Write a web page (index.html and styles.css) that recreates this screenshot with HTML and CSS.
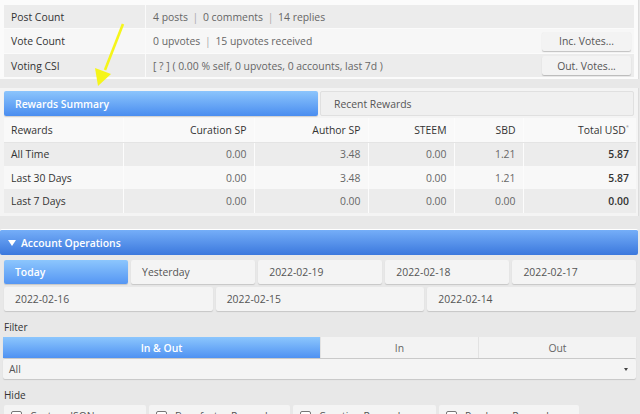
FILE: index.html
```html
<!DOCTYPE html>
<html>
<head>
<meta charset="utf-8">
<link rel="stylesheet" href="styles.css">
</head>
<body>
<div class="page">
  <div class="card info">
    <div class="row g"><div class="lbl">Post Count</div><div class="val">4 posts <span class="sep">|</span> 0 comments <span class="sep">|</span> 14 replies</div></div>
    <div class="row w"><div class="lbl">Vote Count</div><div class="val">0 upvotes <span class="sep">|</span> 15 upvotes received</div><button class="btn">Inc. Votes...</button></div>
    <div class="row g"><div class="lbl">Voting CSI</div><div class="val">[ ? ] ( 0.00 % self, 0 upvotes, 0 accounts, last 7d )</div><button class="btn">Out. Votes...</button></div>
  </div>

  <div class="card rewards">
    <div class="tabs">
      <div class="tab active">Rewards Summary</div>
      <div class="tab">Recent Rewards</div>
    </div>
    <table class="rt">
      <tr class="hd"><td class="l">Rewards</td><td>Curation SP</td><td>Author SP</td><td>STEEM</td><td>SBD</td><td class="last">Total USD<sup>*</sup></td></tr>
      <tr class="g"><td class="l">All Time</td><td>0.00</td><td>3.48</td><td>0.00</td><td>1.21</td><td class="last b">5.87</td></tr>
      <tr class="w"><td class="l">Last 30 Days</td><td>0.00</td><td>3.48</td><td>0.00</td><td>1.21</td><td class="last b">5.87</td></tr>
      <tr class="g"><td class="l">Last 7 Days</td><td>0.00</td><td>0.00</td><td>0.00</td><td>0.00</td><td class="last b">0.00</td></tr>
    </table>
  </div>

  <div class="ops-head"><span class="tri"></span>Account Operations</div>
  <div class="ops">
    <div class="dates five">
      <div class="db on">Today</div>
      <div class="db">Yesterday</div>
      <div class="db">2022-02-19</div>
      <div class="db">2022-02-18</div>
      <div class="db">2022-02-17</div>
    </div>
    <div class="dates three">
      <div class="db">2022-02-16</div>
      <div class="db">2022-02-15</div>
      <div class="db">2022-02-14</div>
    </div>
    <div class="flabel">Filter</div>
    <div class="seg">
      <div class="sb on">In &amp; Out</div>
      <div class="sb">In</div>
      <div class="sb">Out</div>
    </div>
    <div class="sel"><span>All</span><span class="caret"></span></div>
    <div class="flabel hide">Hide</div>
    <div class="checks">
      <div class="cb"><span class="box"></span>Custom JSON</div>
      <div class="cb"><span class="box"></span>Benefactor Rewards</div>
      <div class="cb"><span class="box"></span>Curation Rewards</div>
      <div class="cb"><span class="box"></span>Producer Rewards</div>
    </div>
  </div>

  <svg class="arrow" width="640" height="414" viewBox="0 0 640 414">
    <line x1="123" y1="24" x2="105" y2="70" stroke="#f5f51a" stroke-width="2.6"/>
    <polygon points="98,86 95,68 111,74" fill="#f5f51a"/>
  </svg>
</div>
</body>
</html>
```
FILE: styles.css
```css
* { box-sizing: border-box; }
html, body { margin: 0; padding: 0; }
body {
  background: #e8e8e8;
  font-family: "Open Sans", "Liberation Sans", sans-serif;
  font-size: 10.4px;
  color: #333;
  width: 640px;
  height: 414px;
  overflow: hidden;
}
.page { position: relative; width: 640px; }

.card {
  background: #fbfbfb;
  width: 639px;
  padding: 5px 4px 3px 4px;
  border-right: 1px solid #dcdcdc;
}
.info { height: 79px; }
.row {
  display: grid;
  grid-template-columns: 142px 1fr auto;
  align-items: center;
  margin-bottom: 1px;
  height: 23px;
}
.row.w { height: 24px; }
.row.g { background: #ececec; }
.row.w { background: #f7f7f7; }
.lbl { padding-left: 7px; color: #333; border-right: 1px solid #fafafa; height: 100%; display: flex; align-items: center; }
.val { padding-left: 7px; color: #666; }
.sep { color: #aaa; margin: 0 2px; }
.btn {
  font-family: inherit;
  font-size: 10.4px;
  color: #555;
  width: 89px;
  height: 19px;
  margin-right: 3px;
  background: #f3f3f3;
  border: none;
  border-radius: 2px;
  box-shadow: 0 1px 1px rgba(0,0,0,0.22);
  padding: 0;
}

.rewards {
  margin-top: 9px;
  padding: 3px 4px 3px 4px;
  background: #f4f4f4;
}
.tabs { display: grid; grid-template-columns: 314px 1fr; gap: 2px; height: 25px; }
.tab {
  display: flex; align-items: center;
  padding-left: 13px;
  color: #555;
  background: #f0f0f0;
  border: 1px solid #e0e0e0;
  border-radius: 2px;
}
.tab.active {
  color: #fff;
  font-weight: 600;
  padding-left: 11px;
  background: linear-gradient(#8cc5fc, #4a8df0);
  border: none;
  box-shadow: 0 1px 1px rgba(0,0,0,0.15);
}
.rt {
  width: 632px;
  margin-top: 2px;
  border-collapse: collapse;
  table-layout: fixed;
}
.rt td {
  height: 24px;
  padding: 0 7px 0 7px;
  text-align: right;
  color: #666;
  border-right: 1px solid #fcfcfc;
  white-space: nowrap;
}
.rt tr.w td { height: 23px; }
.rt td.l { text-align: left; color: #333; width: 119px; }
.rt td:nth-child(2) { width: 131px; }
.rt td:nth-child(3) { width: 114px; }
.rt td:nth-child(4) { width: 86px; }
.rt td:nth-child(5) { width: 69px; }
.rt td.last { border-right: none; }
.rt tr.hd td { background: #f9f9f9; color: #333; border-bottom: 1px solid #e4e4e4; }
.rt tr.g td { background: #ececec; }
.rt tr.w td { background: #f8f8f8; }
.rt td.b { color: #333; font-weight: 600; }
.rt sup { font-size: 6px; color: #999; vertical-align: 5px; }

.ops-head {
  margin-top: 13px;
  width: 638px;
  height: 26px;
  display: flex; align-items: center;
  color: #fff;
  font-weight: 600;
  background: linear-gradient(#75aef8, #3b78dd);
  border-radius: 2px;
  border-top: 1px solid #fff;
}
.tri {
  width: 0; height: 0;
  border-left: 4.5px solid transparent;
  border-right: 4.5px solid transparent;
  border-top: 6px solid #fff;
  margin: 0 5px 0 8px;
}
.ops { padding: 5px 4px 0 4px; width: 640px; }
.dates { display: grid; gap: 3px; margin-bottom: 3px; }
.five { grid-template-columns: repeat(5, 1fr); gap: 3px 3.5px; }
.three { grid-template-columns: repeat(3, 1fr); }
.db {
  height: 24px;
  display: flex; align-items: center;
  padding-left: 11px;
  color: #555;
  background: #f4f4f4;
  border-radius: 2px;
  box-shadow: 0 1px 1px rgba(0,0,0,0.15);
}
.db.on {
  color: #fff;
  font-weight: 600;
  background: linear-gradient(#8cc6fd, #5596f3);
}
.flabel { margin-top: 9px; height: 15px; color: #333; font-size: 10px; line-height: 15px; }
.seg {
  display: grid;
  grid-template-columns: 317px 158px 1fr;
  height: 21px;
  margin-top: 2px;
  margin-left: -1px;
  box-shadow: 0 1px 1px rgba(0,0,0,0.15);
  border-radius: 2px;
}
.sb {
  display: flex; align-items: center; justify-content: center;
  background: #f3f3f3;
  color: #666;
  border-left: 1px solid #e2e2e2;
}
.sb.on {
  color: #fff;
  font-weight: 600;
  border: none;
  background: linear-gradient(#8cc6fd, #4f92f2);
}
.sel {
  margin-top: 1px;
  margin-left: -1px;
  height: 20px;
  display: flex; align-items: center; justify-content: space-between;
  padding: 0 8px 0 6px;
  background: #f4f4f4;
  color: #555;
  border-radius: 2px;
  box-shadow: 0 1px 1px rgba(0,0,0,0.15);
}
.caret {
  width: 0; height: 0;
  border-left: 2.5px solid transparent;
  border-right: 2.5px solid transparent;
  border-top: 3px solid #444;
}
.flabel.hide { margin-top: 9px; }
.checks {
  display: grid;
  grid-template-columns: 142px 141px 143px 140px;
  gap: 3px;
  margin-top: 2px;
}
.cb {
  height: 22px;
  display: flex; align-items: center;
  padding-left: 7px;
  background: #f4f4f4;
  color: #555;
  border-radius: 2px;
}
.box {
  width: 11px; height: 11px;
  border: 1px solid #777;
  border-radius: 2px;
  background: #fff;
  margin-right: 8px;
}
.arrow { position: absolute; left: 0; top: 0; pointer-events: none; }
```
